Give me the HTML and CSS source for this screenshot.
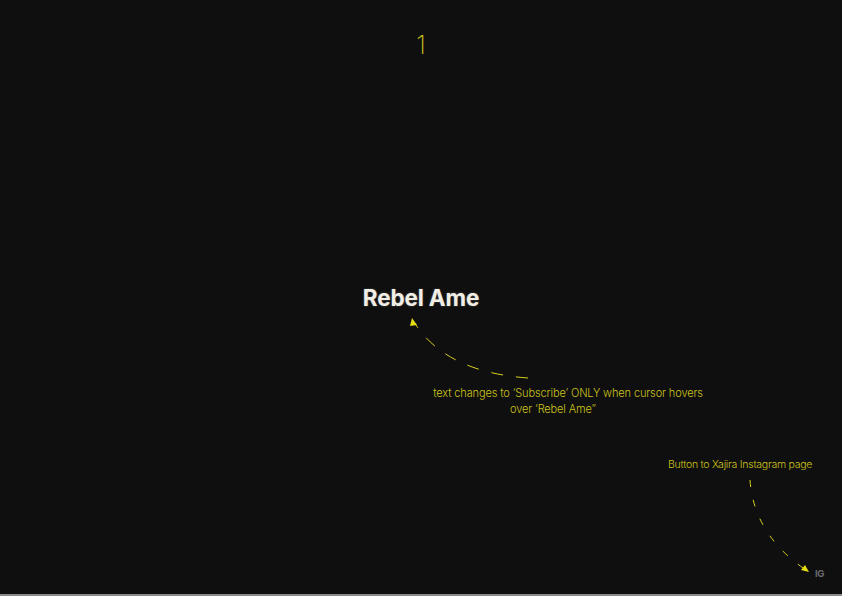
FILE: index.html
```html
<!DOCTYPE html>
<html>
<head>
<meta charset="utf-8">
<link rel="stylesheet" href="styles.css">
</head>
<body>
<div class="page">
  <div class="num">1</div>
  <div class="title">Rebel Ame</div>

  <svg class="arrows" width="842" height="596" viewBox="0 0 842 596">
    <path d="M528 378 Q445 372 414 322" fill="none" stroke="#d9ce1c" stroke-width="1" stroke-dasharray="12 13"/>
    <polygon points="412,318 417,325 410,326" fill="#e6dc14"/>
    <path d="M750 480 Q754 535 806 570" fill="none" stroke="#d9ce1c" stroke-width="1" stroke-dasharray="7 13"/>
    <polygon points="809,572 801,570 805,565" fill="#e6dc14"/>
  </svg>

  <div class="note note-hover">
    <span class="line">text changes to ‘Subscribe’ ONLY when cursor hovers</span>
    <span class="line line-2">over ‘Rebel Ame”</span>
  </div>
  <div class="note note-ig">Button to Xajira Instagram page</div>
  <div class="ig">IG</div>
  <div class="bottom-line"></div>
</div>
</body>
</html>
```

FILE: styles.css
```css
html, body {
  margin: 0;
  padding: 0;
  background: #0f0f0f;
}
.page {
  position: relative;
  width: 842px;
  height: 596px;
  background: #0f0f0f;
  overflow: hidden;
  display: flex;
  flex-direction: column;
  align-items: center;
  font-family: Inter, "Liberation Sans", sans-serif;
}
.num {
  margin-top: 31px;
  color: #cec41c;
  font-size: 25px;
  font-weight: 200;
  line-height: 28px;
}
.title {
  margin-top: 226px;
  color: #f1eee6;
  font-size: 22.5px;
  font-weight: 700;
  letter-spacing: -0.15px;
  line-height: 26px;
  text-shadow: 0 0 2px rgba(240, 238, 230, 0.35);
}
.arrows {
  position: absolute;
  left: 0;
  top: 0;
}
.note {
  position: absolute;
  color: #cdc31c;
  font-weight: 300;
  line-height: 16px;
  white-space: nowrap;
}
.note-hover {
  left: 418px;
  top: 385px;
  width: 300px;
  display: flex;
  flex-direction: column;
  align-items: center;
  font-size: 11px;
  letter-spacing: -0.12px;
}
.line-2 {
  margin-right: 30px;
}
.note-ig {
  left: 668px;
  top: 457px;
  font-size: 10.5px;
  letter-spacing: -0.25px;
}
.ig {
  position: absolute;
  left: 815px;
  top: 568px;
  color: #6a6a6a;
  font-size: 9.5px;
  font-weight: 700;
  letter-spacing: -0.3px;
}
.bottom-line {
  position: absolute;
  left: 0;
  bottom: 0;
  width: 100%;
  height: 2px;
  background: #8a8a8a;
}
```
